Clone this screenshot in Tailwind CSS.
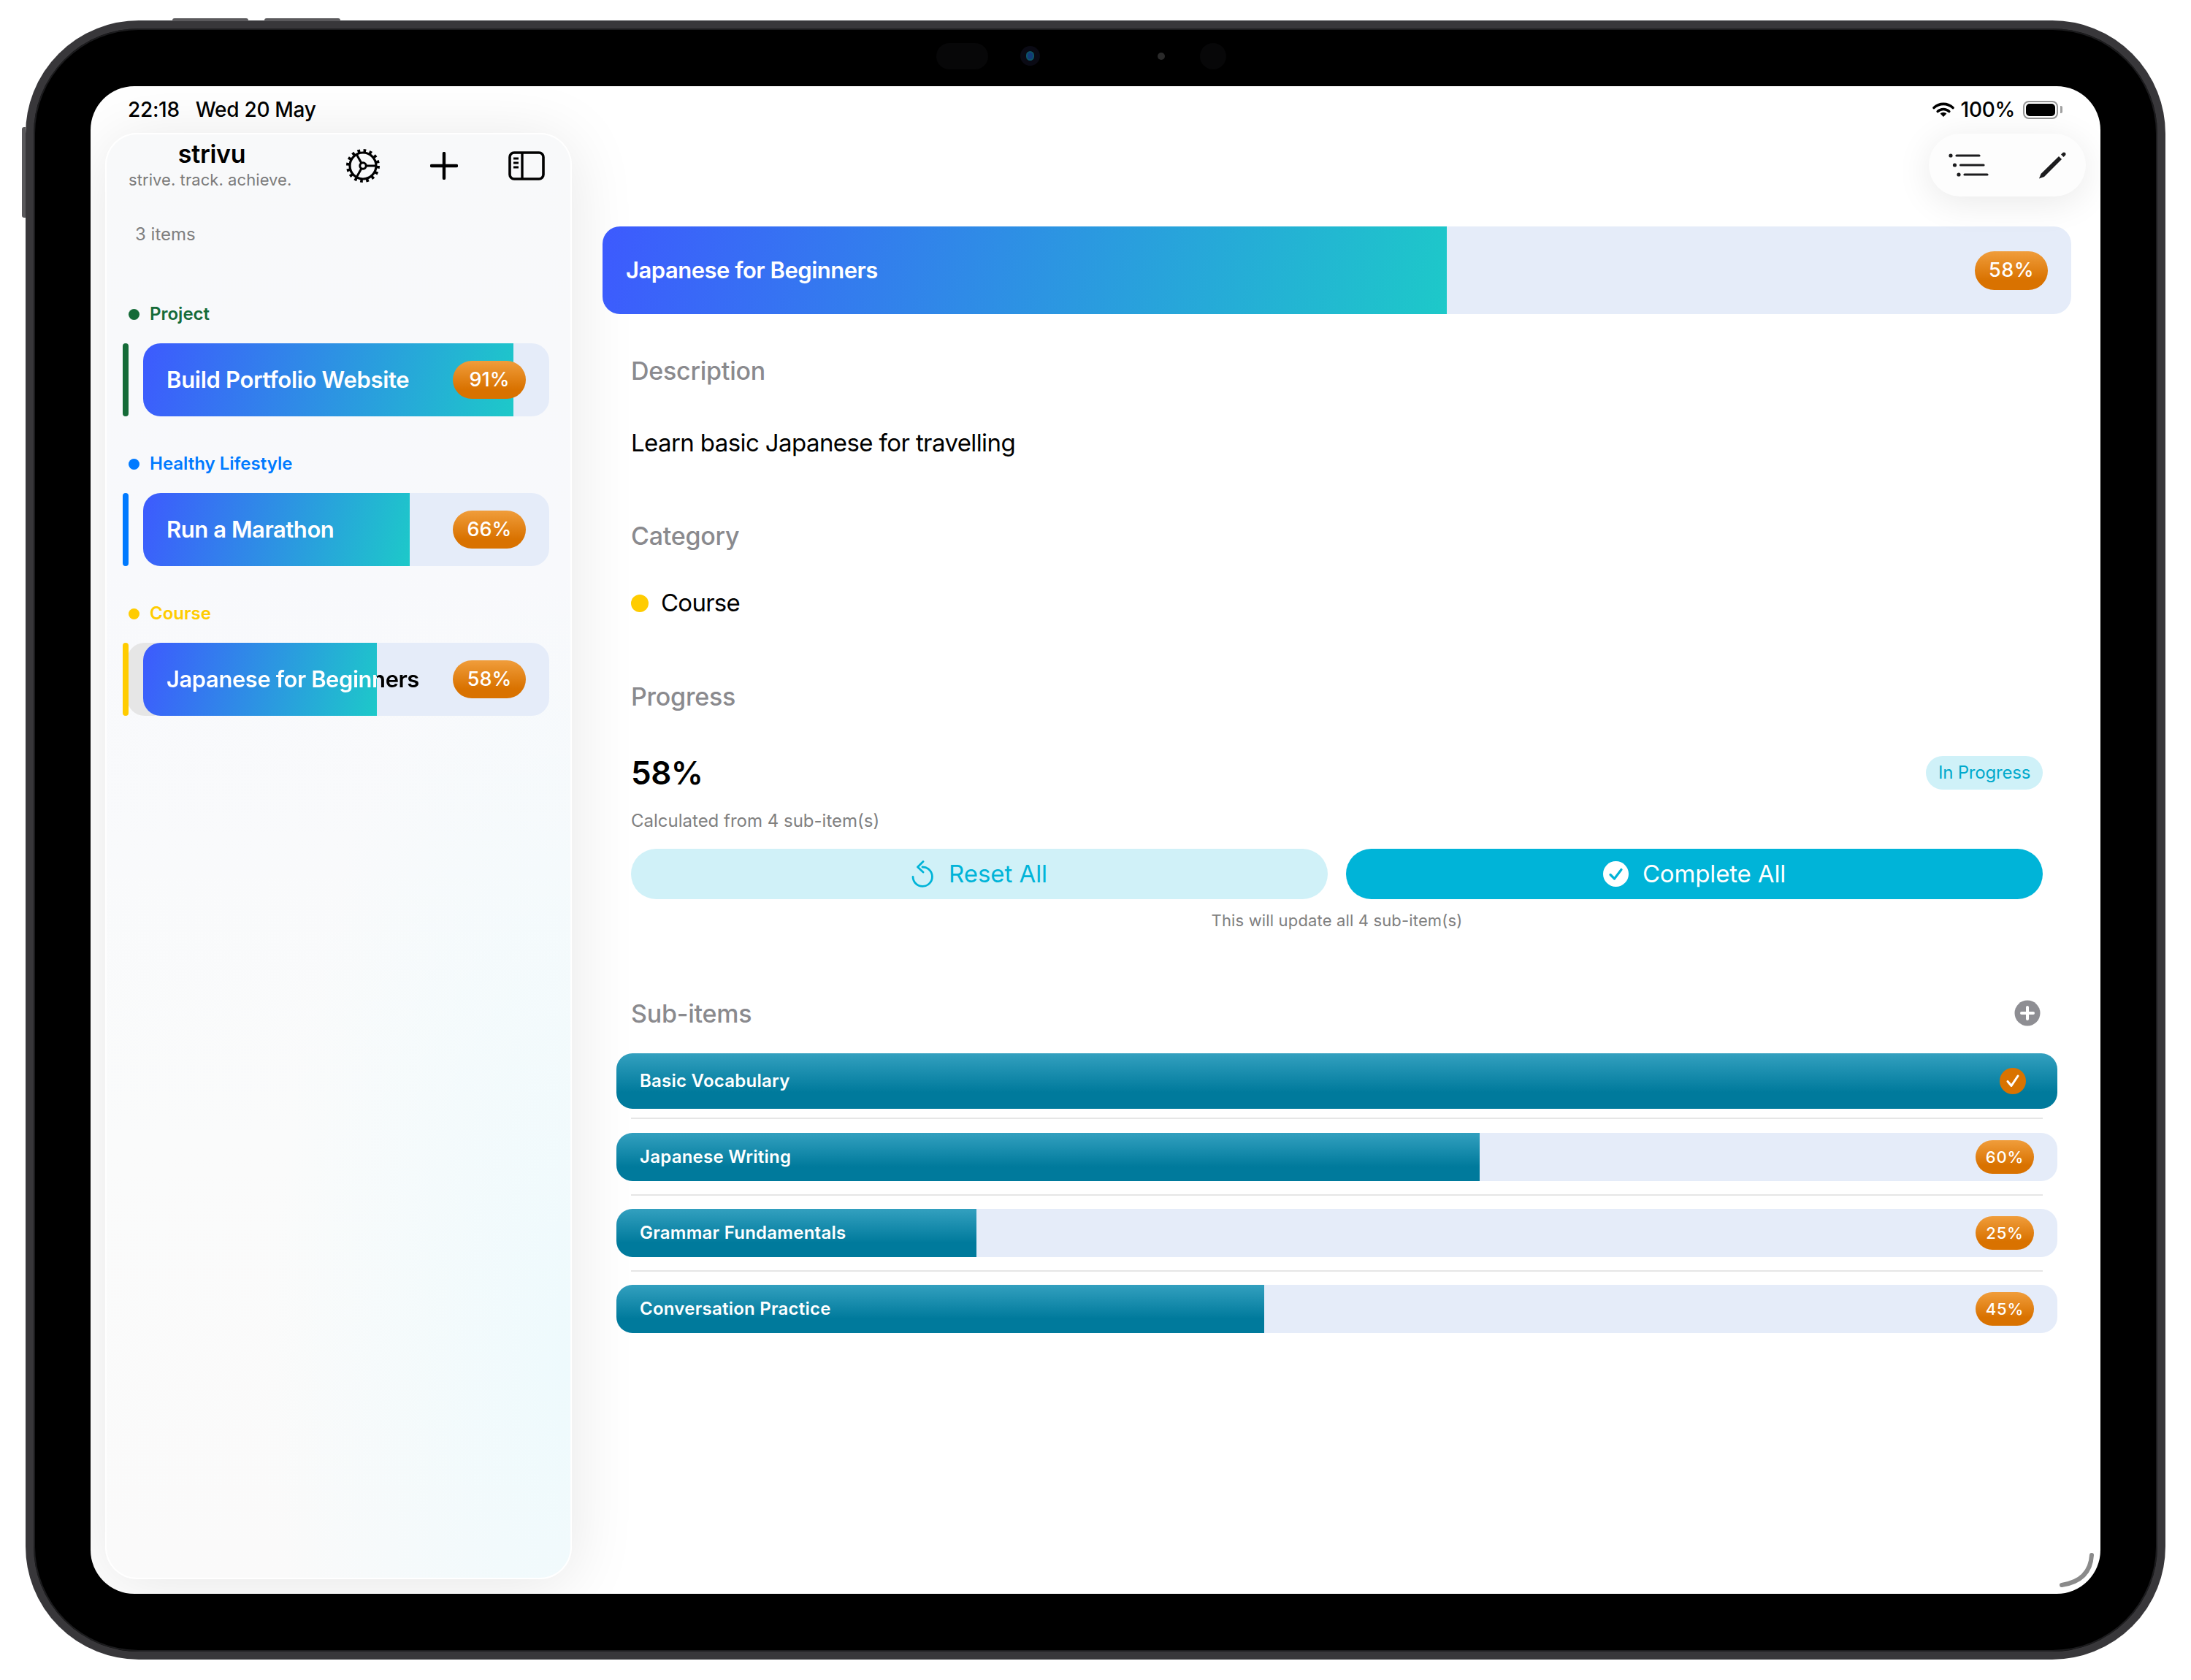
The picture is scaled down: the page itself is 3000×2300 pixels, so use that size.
<!DOCTYPE html>
<html lang="en"><head><meta charset="utf-8"><title>strivu</title>
<script src="https://cdn.jsdelivr.net/npm/@tailwindcss/browser@4"></script></head>
<body class="bg-white font-['Inter','Liberation_Sans',sans-serif] text-black">
<div class="w-[3000px] h-[2300px] pt-[28px] pl-[35px] overflow-hidden">
  <div class="relative w-[2930px] h-[2244px] rounded-[155px] bg-black border-[11px] border-[#38373a] shadow-[inset_0_0_0_2px_#1c1c1e]">
    <!-- hardware buttons -->
    <div class="absolute top-[-14px] left-[190px] w-[104px] h-[4px] rounded-t-[3px] bg-[#5a595c]"></div>
    <div class="absolute top-[-14px] left-[316px] w-[104px] h-[4px] rounded-t-[3px] bg-[#5a595c]"></div>
    <div class="absolute top-[135px] left-[-16px] w-[5px] h-[124px] rounded-l-[3px] bg-[#59585b]"></div>
    <!-- camera row -->
    <div class="h-[79px] relative">
      <div class="absolute left-[1236px] top-[20px] w-[71px] h-[36px] rounded-full bg-[#070708]"></div>
      <div class="absolute left-[1351px] top-[24px] w-[27px] h-[27px] rounded-full bg-[#0a0a14] flex items-center justify-center"><div class="w-[11px] h-[13px] rounded-full bg-[#123a78] border-[2px] border-[#0d5566]"></div></div>
      <div class="absolute left-[1539px] top-[33px] w-[10px] h-[10px] rounded-full bg-[#2a2a2a]"></div>
      <div class="absolute left-[1597px] top-[20px] w-[36px] h-[36px] rounded-full bg-[#070708]"></div>
    </div>
    <!-- screen -->
    <div class="relative ml-[78px] w-[2752px] h-[2064px] rounded-[60px] bg-white overflow-hidden">
      <!-- status bar -->
      <div class="relative z-10 h-[64px] pl-[51px] pr-[52px] pt-[14px] flex items-start justify-between">
        <div class="flex items-center h-[36px] gap-[22px] text-[28px] font-medium tracking-[-0.3px]"><span>22:18</span><span>Wed 20 May</span></div>
        <div class="flex items-center h-[36px]">
          <svg class="w-[30px] h-[22px] mr-[9px]" viewBox="0 0 30 22" fill="none"><path d="M2 8.5A19 19 0 0 1 28 8.5" stroke="#000" stroke-width="3.6" stroke-linecap="round"/><path d="M7.2 13.5A11.5 11.5 0 0 1 22.8 13.5" stroke="#000" stroke-width="3.6" stroke-linecap="round"/><path d="M15 21L10.6 16.4A6.5 6.5 0 0 1 19.4 16.4Z" fill="#000"/></svg>
          <span class="text-[28px] font-medium tracking-[-0.3px] mr-[11px]">100%</span>
          <div class="w-[48px] h-[25px] rounded-[8px] border-[2px] border-[#959595] p-[2px]"><div class="w-full h-full rounded-[5px] bg-black"></div></div>
          <div class="w-[3px] h-[10px] ml-[3px] rounded-r-[2px] bg-[#a0a0a0]"></div>
        </div>
      </div>
      <div class="flex">
        <!-- sidebar -->
        <aside class="ml-[20px] w-[639px] h-[1980px] rounded-[44px] border-[2px] border-white bg-[radial-gradient(ellipse_at_100%_85%,#eefafd,transparent_45%),linear-gradient(180deg,#f8f9fa,#f8f9fc_30%,#fafbfb_70%,#fafafa)] shadow-[0_8px_90px_rgba(0,0,0,0.1)]">
          <div class="flex h-[88px]">
            <div class="w-[288px] pl-[30px] pt-[8px]">
              <div class="h-[38px] flex items-center justify-center text-[34px] font-semibold leading-none pr-[30px] tracking-[-0.3px]">strivu</div>
              <div class="h-[26px] mt-[3px] flex items-center text-[22px] text-[#7b7b7b] tracking-[0.07px] whitespace-nowrap">strive. track. achieve.</div>
            </div>
            <svg class="w-[50px] h-[50px] ml-[38px] mt-[18px]" viewBox="0 0 50 50" fill="none" stroke="#000"><circle cx="25" cy="25" r="20.5" stroke-width="5" stroke-dasharray="3.6 4.45"/><circle cx="25" cy="25" r="18" stroke-width="3.2"/><circle cx="25" cy="25" r="4.2" stroke-width="3"/><path d="M29 25H43M23 28.5L16 41M23 21.5L16 9" stroke-width="3"/></svg>
            <svg class="w-[38px] h-[38px] ml-[67px] mt-[24px]" viewBox="0 0 38 38" fill="none" stroke="#000" stroke-width="4.4" stroke-linecap="round"><path d="M19 2V36M2 19H36"/></svg>
            <svg class="w-[50px] h-[40px] ml-[69px] mt-[23px]" viewBox="0 0 50 40" fill="none" stroke="#000"><rect x="2" y="2" width="46" height="36" rx="6" stroke-width="3.6"/><path d="M19 2V38" stroke-width="3.4"/><path d="M7 10H14M7 16H14M7 22H14" stroke-width="2.8"/></svg>
          </div>
          <div class="mt-[29px] h-[40px] pl-[39px] flex items-center text-[24px] text-[#808080]">3 items</div>
          <div class="mt-[69px] h-[40px] pl-[30px] flex items-center gap-[14px] text-[24px] font-semibold text-[#156b38]"><span class="w-[15px] h-[15px] rounded-full bg-[#156b38]"></span>Project</div>
          <div class="relative mt-[20px] ml-[22px] h-[100px] flex">
            <div class="w-[8px] h-full rounded-full bg-[#156b38]"></div>
            <div class="relative ml-[20px] w-[556px] h-full rounded-[24px] bg-[#e5ecf9] overflow-hidden">
              <div class="absolute inset-y-0 left-0 w-[507px] bg-[linear-gradient(105deg,#3d5afe,#1dc9c9)]"></div>
              <div class="relative h-full pl-[32px] pr-[32px] flex items-center justify-between"><span class="text-[31px] font-semibold text-white tracking-[-0.3px]">Build Portfolio Website</span><span class="w-[100px] h-[52px] rounded-[26px] bg-[linear-gradient(180deg,#f09d3b,#d97200_75%)] flex items-center justify-center text-[27px] font-medium text-white">91%</span></div>
            </div>
          </div>
          <div class="mt-[45px] h-[40px] pl-[30px] flex items-center gap-[14px] text-[24px] font-semibold text-[#007aff]"><span class="w-[15px] h-[15px] rounded-full bg-[#007aff]"></span>Healthy Lifestyle</div>
          <div class="relative mt-[20px] ml-[22px] h-[100px] flex">
            <div class="w-[8px] h-full rounded-full bg-[#007aff]"></div>
            <div class="relative ml-[20px] w-[556px] h-full rounded-[24px] bg-[#e5ecf9] overflow-hidden">
              <div class="absolute inset-y-0 left-0 w-[365px] bg-[linear-gradient(105deg,#3d5afe,#1dc9c9)]"></div>
              <div class="relative h-full pl-[32px] pr-[32px] flex items-center justify-between"><span class="text-[31px] font-semibold text-white tracking-[-0.45px]">Run a Marathon</span><span class="w-[100px] h-[52px] rounded-[26px] bg-[linear-gradient(180deg,#f09d3b,#d97200_75%)] flex items-center justify-center text-[27px] font-medium text-white">66%</span></div>
            </div>
          </div>
          <div class="mt-[45px] h-[40px] pl-[30px] flex items-center gap-[14px] text-[24px] font-semibold text-[#ffcc00]"><span class="w-[15px] h-[15px] rounded-full bg-[#ffcc00]"></span>Course</div>
          <div class="relative mt-[20px] ml-[22px] h-[100px] flex">
            <div class="absolute left-[6px] top-0 w-[60px] h-full rounded-[24px] bg-[#e6e6e6]"></div>
            <div class="relative w-[8px] h-full rounded-full bg-[#ffcc00]"></div>
            <div class="relative ml-[20px] w-[556px] h-full rounded-[24px] bg-[#e5ecf9] overflow-hidden">
              <div class="absolute inset-y-0 left-0 w-[320px] bg-[linear-gradient(105deg,#3d5afe,#1dc9c9)]"></div>
              <div class="relative h-full pl-[32px] pr-[32px] flex items-center justify-between"><span class="text-[31px] font-semibold tracking-[-0.45px] text-transparent bg-clip-text bg-[linear-gradient(90deg,#fff_288px,#000_288px)] leading-[44px]">Japanese for Beginners</span><span class="w-[100px] h-[52px] rounded-[26px] bg-[linear-gradient(180deg,#f09d3b,#d97200_75%)] flex items-center justify-center text-[27px] font-medium text-white">58%</span></div>
            </div>
          </div>
        </aside>
        <!-- main -->
        <main class="relative ml-[42px] w-[2011px] pt-[128px]">
          <div class="relative h-[120px] rounded-[24px] bg-[#e5ecf9] overflow-hidden">
            <div class="absolute inset-y-0 left-0 w-[1156px] bg-[linear-gradient(105deg,#3d5afe,#1dc9c9)]"></div>
            <div class="relative h-full pl-[32px] pr-[32px] flex items-center justify-between"><span class="text-[31px] font-semibold text-white tracking-[-0.5px]">Japanese for Beginners</span><span class="w-[100px] h-[53px] rounded-[27px] bg-[linear-gradient(180deg,#f09d3b,#d97200_75%)] flex items-center justify-center text-[27px] font-medium text-white tracking-[0.5px]">58%</span></div>
          </div>
          <div class="px-[39px]">
            <div class="mt-[52px] h-[50px] flex items-center text-[34px] font-medium text-[#8a8a8e] tracking-[-0.25px]">Description</div>
            <div class="mt-[50px] h-[50px] flex items-center text-[33px] tracking-[-0.6px]">Learn basic Japanese for travelling</div>
            <div class="mt-[76px] h-[50px] flex items-center text-[34px] font-medium text-[#8a8a8e] tracking-[-0.25px]">Category</div>
            <div class="mt-[43px] h-[50px] flex items-center gap-[17px] text-[33px] tracking-[-0.75px]"><span class="w-[24px] h-[24px] rounded-full bg-[#ffcc00]"></span>Course</div>
            <div class="mt-[77px] h-[50px] flex items-center text-[34px] font-medium text-[#8a8a8e] tracking-[-0.25px]">Progress</div>
            <div class="mt-[50px] h-[60px] flex items-center justify-between"><span class="text-[44px] font-semibold tracking-[-0.5px]">58%</span><span class="w-[160px] h-[46px] rounded-full bg-[#cff1f8] flex items-center justify-center text-[24px] text-[#00a9cc] tracking-[-0.2px]">In Progress</span></div>
            <div class="mt-[18px] h-[36px] flex items-center text-[24px] text-[#808080] tracking-[0px]">Calculated from 4 sub-item(s)</div>
            <div class="mt-[20px] flex gap-[25px]">
              <div class="flex-1 h-[69px] rounded-full bg-[#d0f1f8] flex items-center justify-center gap-[21px] text-[33px] text-[#00b4d8] tracking-[-0.05px]">
                <svg class="w-[30px] h-[37px]" viewBox="0 0 30 37" fill="none" stroke="#00b4d8" stroke-width="2.8" stroke-linecap="round" stroke-linejoin="round"><path d="M15 9A13.2 13.2 0 1 1 2 22.5"/><path d="M16 1.5L8.5 9L16 16"/></svg>
                <span>Reset All</span>
              </div>
              <div class="flex-1 h-[69px] rounded-full bg-[#00b4d8] flex items-center justify-center gap-[19px] text-[33px] text-white tracking-[-0.15px]">
                <svg class="w-[35px] h-[35px]" viewBox="0 0 35 35"><circle cx="17.5" cy="17.5" r="17.5" fill="#fff"/><path d="M10 18.5L15.5 24L25 11.5" fill="none" stroke="#00b4d8" stroke-width="3.2" stroke-linecap="round" stroke-linejoin="round"/></svg>
                <span>Complete All</span>
              </div>
            </div>
            <div class="mt-[14px] h-[30px] flex items-center justify-center text-[22px] text-[#808080] tracking-[0.15px]">This will update all 4 sub-item(s)</div>
            <div class="mt-[87px] h-[50px] flex items-center justify-between text-[34px] font-medium text-[#8a8a8e] tracking-[-0.25px]">Sub-items
              <svg class="w-[36px] h-[36px] mr-[3px]" viewBox="0 0 36 36"><circle cx="18" cy="18" r="17.5" fill="#8e8e93"/><path d="M18 10V26M10 18H26" stroke="#fff" stroke-width="4" stroke-linecap="round"/></svg>
            </div>
          </div>
          <div class="px-[19px] mt-[30px]">
            <div class="relative h-[76px] rounded-[22px] bg-[linear-gradient(180deg,#33a0bf,#007a9c_70%)] pl-[32px] pr-[43px] flex items-center justify-between">
              <span class="text-[24px] font-semibold text-white tracking-[0.25px]">Basic Vocabulary</span>
              <svg class="w-[36px] h-[36px]" viewBox="0 0 36 36"><circle cx="18" cy="18" r="18" fill="#d97300"/><path d="M11 18.5L16 24.5L25 11" fill="none" stroke="#fff" stroke-width="3" stroke-linecap="round" stroke-linejoin="round"/></svg>
            </div>
            <div class="mt-[12px] mb-[19px] mx-[20px] h-[2px] bg-[#e6e6e6]"></div>
            <div class="relative h-[66px] rounded-[22px] bg-[#e5ecf9] overflow-hidden">
              <div class="absolute inset-y-0 left-0 w-[1182px] bg-[linear-gradient(180deg,#33a0bf,#007a9c_70%)]"></div>
              <div class="relative h-full pl-[32px] pr-[32px] flex items-center justify-between"><span class="text-[24px] font-semibold text-white tracking-[0.25px]">Japanese Writing</span><span class="w-[80px] h-[46px] rounded-[23px] bg-[linear-gradient(180deg,#f09d3b,#d97200_75%)] flex items-center justify-center text-[22px] font-medium text-white tracking-[0.8px]">60%</span></div>
            </div>
            <div class="mt-[18px] mb-[18px] mx-[20px] h-[2px] bg-[#e6e6e6]"></div>
            <div class="relative h-[66px] rounded-[22px] bg-[#e5ecf9] overflow-hidden">
              <div class="absolute inset-y-0 left-0 w-[493px] bg-[linear-gradient(180deg,#33a0bf,#007a9c_70%)]"></div>
              <div class="relative h-full pl-[32px] pr-[32px] flex items-center justify-between"><span class="text-[24px] font-semibold text-white tracking-[0.25px]">Grammar Fundamentals</span><span class="w-[80px] h-[46px] rounded-[23px] bg-[linear-gradient(180deg,#f09d3b,#d97200_75%)] flex items-center justify-center text-[22px] font-medium text-white tracking-[0.8px]">25%</span></div>
            </div>
            <div class="mt-[18px] mb-[18px] mx-[20px] h-[2px] bg-[#e6e6e6]"></div>
            <div class="relative h-[66px] rounded-[22px] bg-[#e5ecf9] overflow-hidden">
              <div class="absolute inset-y-0 left-0 w-[887px] bg-[linear-gradient(180deg,#33a0bf,#007a9c_70%)]"></div>
              <div class="relative h-full pl-[32px] pr-[32px] flex items-center justify-between"><span class="text-[24px] font-semibold text-white tracking-[0.25px]">Conversation Practice</span><span class="w-[80px] h-[46px] rounded-[23px] bg-[linear-gradient(180deg,#f09d3b,#d97200_75%)] flex items-center justify-center text-[22px] font-medium text-white tracking-[0.8px]">45%</span></div>
            </div>
          </div>
        </main>
      </div>
      <!-- floating toolbar -->
      <div class="absolute z-10 top-[65px] right-[20px] w-[215px] h-[86px] rounded-full bg-[#fdfdfd] shadow-[0_8px_50px_rgba(0,0,0,0.09)] flex items-center justify-between pl-[26px] pr-[26px]">
        <svg class="w-[56px] h-[34px]" viewBox="0 0 56 34" fill="none" stroke="#1c1c1e" stroke-width="3.2" stroke-linecap="round"><path d="M12 4H43M17.5 17H49M23 30H54"/><circle cx="4" cy="4" r="2.6" fill="#1c1c1e" stroke="none"/><circle cx="9.5" cy="17" r="2.6" fill="#1c1c1e" stroke="none"/><circle cx="15" cy="30" r="2.6" fill="#1c1c1e" stroke="none"/></svg>
        <svg class="w-[38px] h-[38px]" viewBox="0 0 38 38" fill="#1c1c1e"><path d="M0 37.5L2.5 31L27 7L31 11L7 35Z"/><path d="M30 4.5L32.5 2Q34 .8 35.5 2L36 2.5Q37.3 4 36 5.5L33.5 8Z"/></svg>
      </div>
      <!-- corner indicator -->
      <svg class="absolute right-[8px] bottom-[8px] w-[48px] h-[48px]" viewBox="0 0 48 48" fill="none"><path d="M44 3Q42 38 3 44" stroke="#8a8a8a" stroke-width="6" stroke-linecap="round"/></svg>
    </div>
  </div>
</div>
</body></html>
